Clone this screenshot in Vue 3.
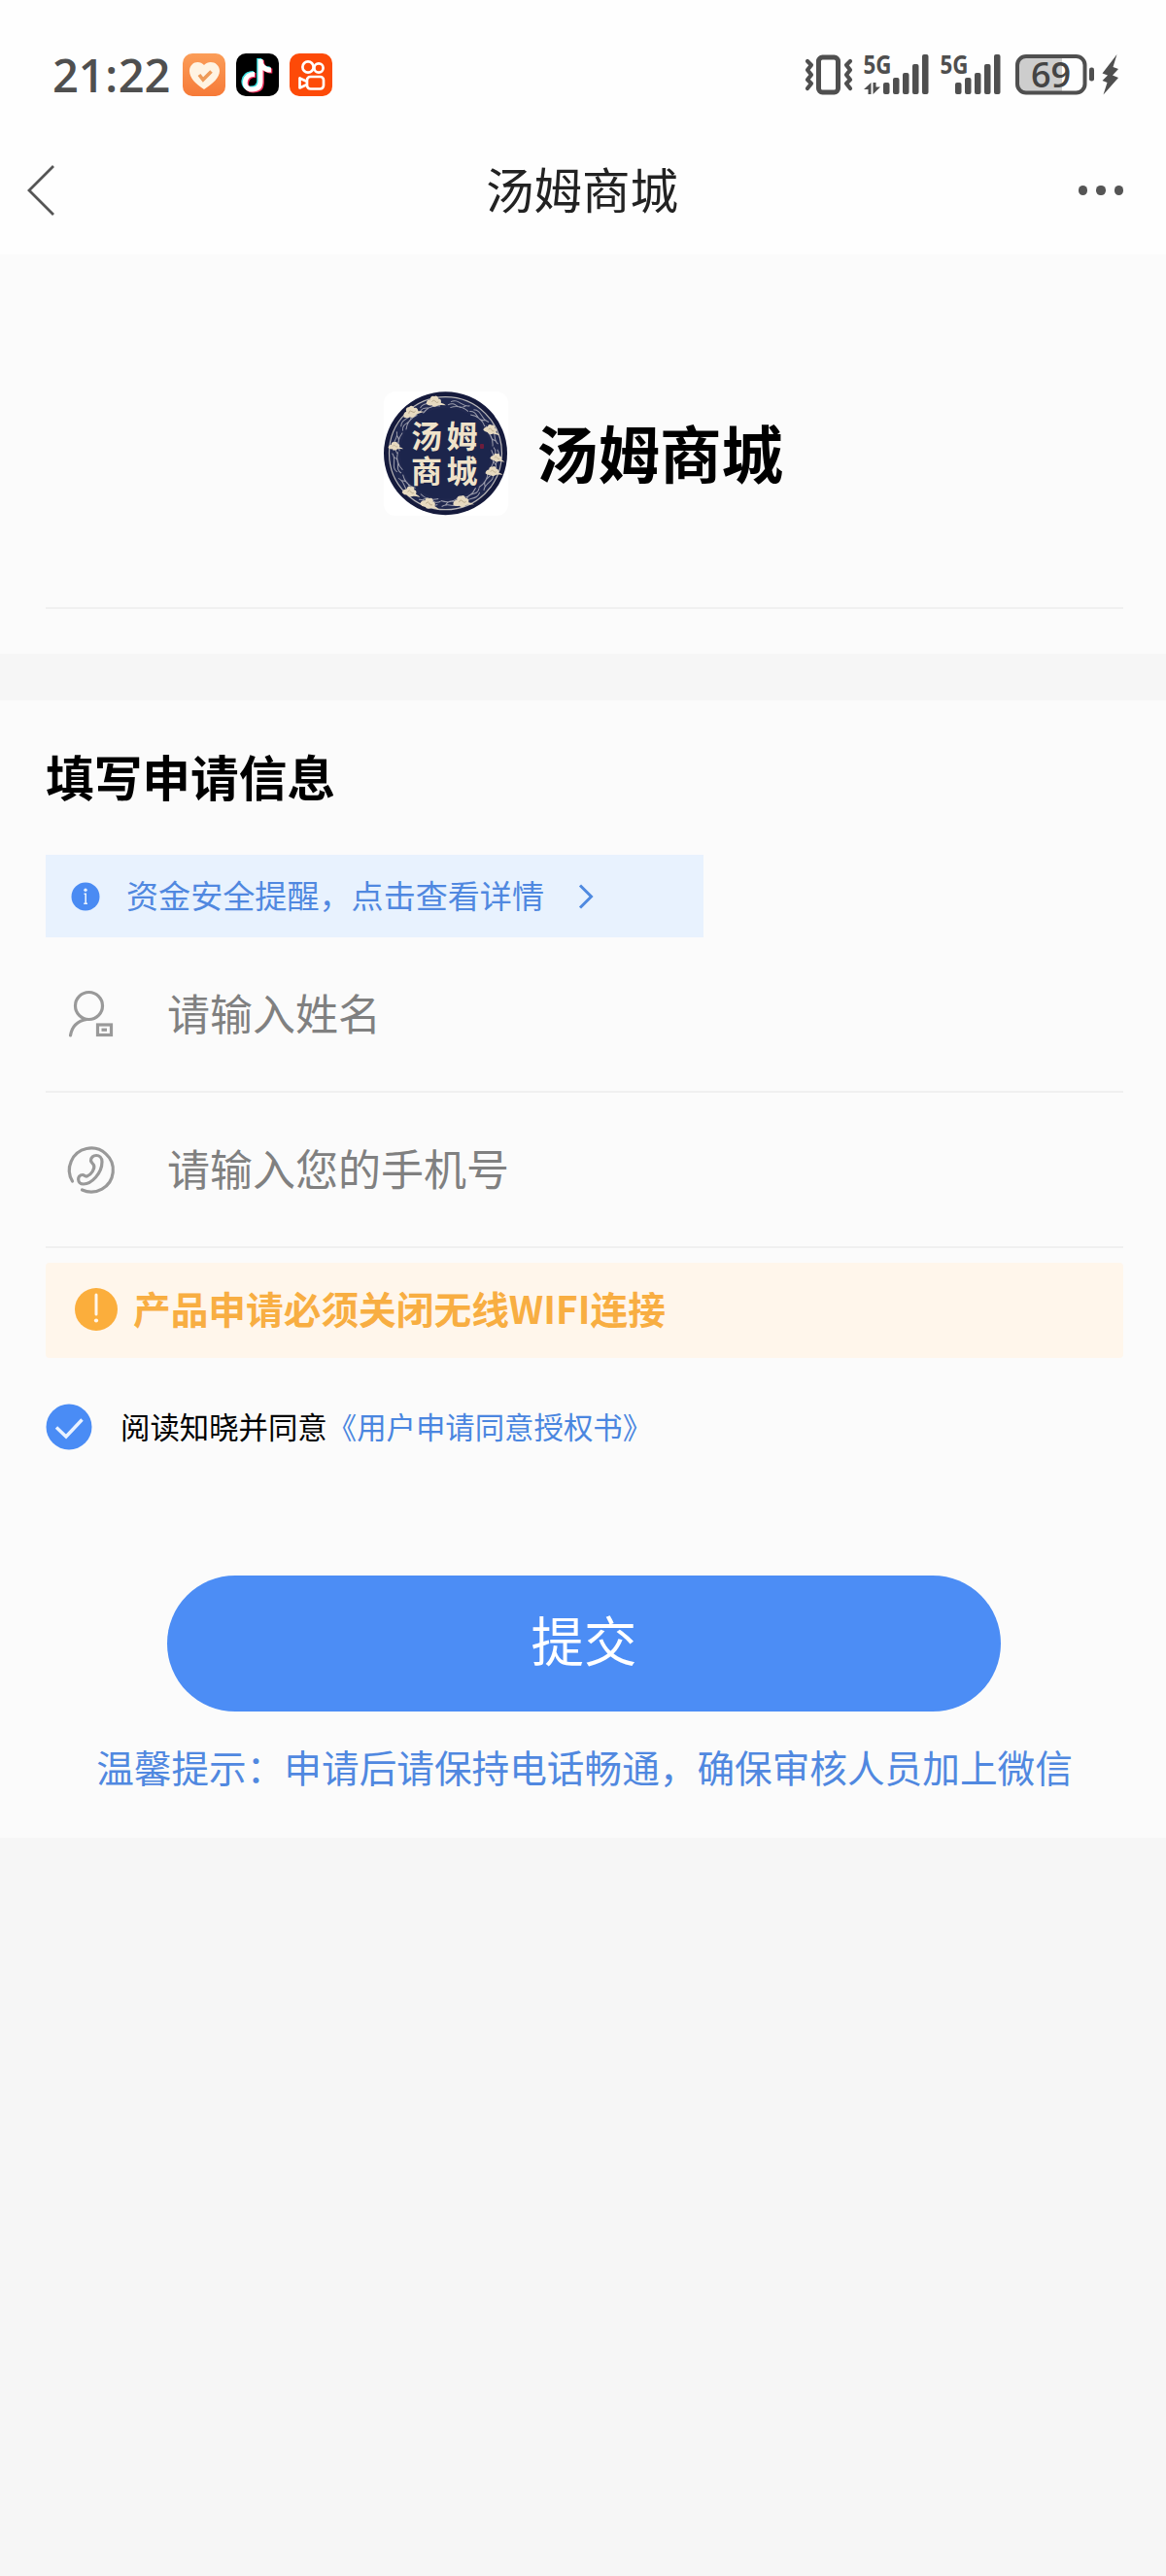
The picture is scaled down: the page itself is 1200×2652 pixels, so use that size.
<template>
    <div class="page">
        <header class="top">
            <div class="status">
                <div class="status-left">
                    <span class="clock">21<i class="colon">:</i>22</span>
                    <svg class="app-icon" viewBox="0 0 44 44">
                        <defs>
                            <linearGradient id="heart-bg" x1="0" y1="0" x2="0" y2="1">
                                <stop offset="0" stop-color="#fb9d58" />
                                <stop offset="1" stop-color="#f67a38" />
                            </linearGradient>
                        </defs>
                        <rect width="44" height="44" rx="10" fill="url(#heart-bg)" />
                        <path d="M22 37C13 31 7 25 7 18C7 9 17 6 22 12C27 6 38 9 38 18C38 25 31 31 22 37Z" fill="#fff3e2" />
                        <path d="M17 22L21 27L29.500 18.500" fill="none" stroke="#ee9a57" stroke-width="3.600" />
                    </svg>
                    <svg class="app-icon" viewBox="0 0 44 44">
                        <rect width="44" height="44" rx="10" fill="#000" />
                        <g fill="none" stroke-width="5">
                            <path :d="notePath" stroke="#37dfe0" transform="translate(-1.300 -1)" />
                            <path :d="notePath" stroke="#f5315d" transform="translate(1.300 1)" />
                            <path :d="notePath" stroke="#fff" />
                        </g>
                    </svg>
                    <svg class="app-icon" viewBox="0 0 44 44">
                        <rect width="44" height="44" rx="10" fill="#fd4a08" />
                        <g fill="none" stroke="#fff" stroke-width="2.700" stroke-linejoin="round">
                            <circle cx="19" cy="14" r="5.600" />
                            <circle cx="30" cy="15" r="4.600" />
                            <rect x="18" y="24" width="17" height="12.500" rx="3.500" />
                            <path d="M18 29L10.500 25.500V35.500L18 32" />
                        </g>
                    </svg>
                </div>
                <div class="status-right">
                    <svg class="vibrate" viewBox="0 0 50 42">
                        <rect x="14.500" y="3" width="20" height="36" rx="4" fill="none" stroke="#4f4f4f" stroke-width="5" />
                        <g fill="none" stroke="#4f4f4f" stroke-width="4.200" stroke-linecap="round" stroke-linejoin="round">
                            <path d="M3 7L7 11L3 16L7 21L3 26L7 30L3 35" />
                            <path d="M47 7L43 11L47 16L43 21L47 26L43 30L47 35" />
                        </g>
                    </svg>
                    <svg class="signal data" viewBox="0 0 67 42">
                        <text x="-.5" y="20" class="net" textLength="29" lengthAdjust="spacingAndGlyphs">5G</text>
                        <path d="M0 36L7.500 29V41H4.500V36ZM9.500 29H12.500V33.500H17L9.500 41Z" fill="#4f4f4f" />
                        <rect v-for="bar in bars" :key="bar.x" :x="bar.x + 20" :y="41 - bar.h" width="6.500" :height="bar.h" rx="2" fill="#4f4f4f" />
                    </svg>
                    <svg class="signal" viewBox="0 0 62 42">
                        <text x="-.5" y="20" class="net" textLength="29" lengthAdjust="spacingAndGlyphs">5G</text>
                        <rect v-for="bar in bars" :key="bar.x" :x="bar.x + 15" :y="41 - bar.h" width="6.500" :height="bar.h" rx="2" fill="#4f4f4f" />
                    </svg>
                    <svg class="battery" viewBox="0 0 106 42">
                        <path d="M10 2H48V39H10Q2 39 2 31V10Q2 2 10 2Z" fill="#cdcdcd" />
                        <rect x="2" y="2" width="69.500" height="37.500" rx="9" fill="none" stroke="#4f4f4f" stroke-width="4" />
                        <text x="36.500" y="33.500" class="level" text-anchor="middle">69</text>
                        <rect x="76" y="13.500" width="5" height="14" rx="2.200" fill="#4f4f4f" />
                        <path d="M104.500 0L89.500 19.500L95 21.500L89.500 27L94.500 29L90.500 41.500L106 24L100 21.500L106 15L100.500 13Z" fill="#4f4f4f" />
                    </svg>
                </div>
            </div>
            <nav class="nav">
                <svg class="back" viewBox="0 0 28 52">
                    <path d="M27 1L2 26L27 51" fill="none" stroke="#555" stroke-width="2.800" />
                </svg>
                <h1 class="nav-title">{{ shopName }}</h1>
                <div class="more"><i></i><i></i><i></i></div>
            </nav>
        </header>

        <section class="brand">
            <div class="brand-inner">
                <svg class="logo" viewBox="5 6 128 128">
                    <rect x="5" y="6" width="128" height="128" rx="12" fill="#fff" />
                    <circle cx="68.500" cy="69.700" r="63.500" fill="#151a3c" />
                    <circle cx="68.500" cy="69.700" r="58" fill="#20284f" stroke="#b9b7b8" stroke-width="1.200" />
                    <g fill="none" stroke="#9d9ead" stroke-width="1">
                        <path v-for="a in waves" :key="a" :transform="`rotate(${a} 68.500 69.700)`"
                            d="M58 21C65 14 69 25 76 17M60 17C67 11 72 20 80 16M61 23Q70 17 80 22" />
                    </g>
                    <circle cx="68.500" cy="69.700" r="46.500" fill="#1c254c" />
                    <g v-for="c in clouds" :key="c.x" :transform="`translate(${c.x} ${c.y}) rotate(${c.r}) scale(${c.s})`">
                        <path d="M-10 3Q-9 -2 -5 -2Q-5 -7 0 -6Q4 -8 5 -3Q9 -3 8 2Q12 3 14 5Q5 4 3 6Q-1 8 -3 5Q-7 6 -10 3Z" fill="#e7dac0" />
                        <path d="M-3 1Q-1 -3 1 0T5 1" fill="none" stroke="#a99878" stroke-width=".8" />
                    </g>
                    <text class="seal" x="33" y="64">汤</text>
                    <text class="seal" x="69.500" y="64">姆</text>
                    <text class="seal" x="33" y="100">商</text>
                    <text class="seal" x="69.500" y="100">城</text>
                    <rect x="104" y="60" width="4" height="5" rx="1" fill="#6d1c3c" />
                </svg>
                <h2 class="brand-name">{{ shopName }}</h2>
            </div>
        </section>

        <section class="panel">
            <h3 class="panel-title">填写申请信息</h3>

            <a class="notice">
                <svg class="notice-icon" viewBox="0 0 30 30">
                    <circle cx="15" cy="15" r="14.500" fill="#4a8bf3" />
                    <circle cx="15" cy="8.300" r="1.700" fill="#e8f2fe" />
                    <path d="M13.500 12.300H15.200V22M13.200 22.300H17" fill="none" stroke="#e8f2fe" stroke-width="1.600" />
                </svg>
                <span>资金安全提醒，点击查看详情</span>
                <svg class="arrow" viewBox="0 0 16 28">
                    <path d="M2 2.500L13.500 14L2 25.500" fill="none" stroke="#4f8ae0" stroke-width="3" />
                </svg>
            </a>

            <label class="field">
                <svg class="field-icon" viewBox="0 0 50 50">
                    <g fill="none" stroke="#999" stroke-width="3.200">
                        <circle cx="22.500" cy="16.500" r="14" />
                        <path d="M20 30.500C11 32 5 38 3.500 47" stroke-linecap="round" />
                        <rect x="31.500" y="36" width="14" height="10.500" />
                        <path d="M35.500 41.200H41" />
                    </g>
                </svg>
                <input v-model="name" type="text" placeholder="请输入姓名">
            </label>

            <label class="field">
                <svg class="field-icon" viewBox="0 0 50 50">
                    <g fill="none" stroke="#999" stroke-width="3.200" stroke-linecap="round" stroke-linejoin="round">
                        <path d="M5.500 37A22.500 22.500 0 1 1 15.500 46" />
                        <path d="M24.500 16C24 9 36 8 36 17C36 29 25 40 17 40C10 40 10 30.500 16 30.500C18 30.500 18 32.500 20.500 32C25 30.500 29 24 27.500 20.500C26.500 18.500 25 18 24.500 16Z" />
                    </g>
                </svg>
                <input v-model="phone" type="tel" placeholder="请输入您的手机号">
            </label>

            <div class="warning">
                <svg class="warning-icon" viewBox="0 0 44 44">
                    <circle cx="22" cy="22" r="22" fill="#fbae3c" />
                    <path d="M22 7V27" stroke="#fff6ea" stroke-width="3" stroke-linecap="round" />
                    <circle cx="22" cy="33.500" r="2.100" fill="#fff6ea" />
                </svg>
                <span>产品申请必须关闭无线WIFI连接</span>
            </div>

            <div class="agree" @click="agreed = !agreed">
                <svg class="check" viewBox="0 0 48 48">
                    <circle cx="24" cy="24" r="23.500" :fill="agreed ? '#4a8cf5' : '#ccc'" />
                    <path d="M11 24.500L21 34L37.500 16.500" fill="none" stroke="#e9f2ff" stroke-width="3.400" />
                </svg>
                <span>阅读知晓并同意<a class="link">《用户申请同意授权书》</a></span>
            </div>

            <button class="submit" type="button">提交</button>
            <p class="tip">温馨提示：申请后请保持电话畅通，确保审核人员加上微信</p>
        </section>
    </div>
</template>

<script setup>
import { ref } from 'vue'

const shopName = '汤姆商城'
const name = ref('')
const phone = ref('')
const agreed = ref(true)

const notePath = 'M19 21.500C7 21 6 37 16 37C22 37 25 34 25 29V6C25 13 29 17 36 17'

// signal strength bars, drawn up from the baseline
const bars = [
    { x: 0, h: 12 },
    { x: 10, h: 17 },
    { x: 20, h: 22 },
    { x: 30, h: 31 },
    { x: 40, h: 41 }
]

const waves = [15, 42, 68, 95, 122, 148, 172, 198, 230, 258, 282, 310, 340]

// clouds around the rim of the logo
const clouds = [
    { x: 57, y: 16, r: 0, s: 0.85 },
    { x: 33, y: 27, r: -20, s: 0.9 },
    { x: 115, y: 45, r: 15, s: 0.75 },
    { x: 16, y: 62, r: 0, s: 0.65 },
    { x: 121, y: 74, r: 10, s: 0.65 },
    { x: 117, y: 88, r: 0, s: 0.75 },
    { x: 32, y: 109, r: 10, s: 0.8 },
    { x: 51, y: 121, r: 12, s: 0.85 },
    { x: 85, y: 119, r: -5, s: 0.9 }
]
</script>

<style>
body {
    background: #f6f6f6;
}
</style>

<style scoped>
.page {
    width: 1200px;
    min-height: 2652px;
    background: #f6f6f6;
    font-family: "Noto Sans CJK SC", sans-serif;
    color: #000;
}

h1,
h2,
h3,
p {
    margin: 0;
}

svg {
    display: block;
    flex: none;
    overflow: visible;
}

.top {
    height: 262px;
    background: #fefefe;
}

.status {
    display: flex;
    justify-content: space-between;
    align-items: center;
    height: 154px;
    padding: 0 49px 0 54px;
}

.status-left {
    display: flex;
    align-items: center;
    gap: 11px;
}

.clock {
    width: 123px;
    font: 600 47px/50px "Open Sans", sans-serif;
    color: #4f4f4f;
    white-space: nowrap;
}

.colon {
    display: inline-block;
    width: 14px;
    font-style: normal;
    text-align: center;
}

.app-icon {
    width: 44px;
    height: 44px;
}

.status-right {
    display: flex;
    align-items: center;
    padding-bottom: 1px;
}

.vibrate {
    width: 50px;
    height: 42px;
    margin-right: 11px;
}

.signal {
    width: 62px;
    height: 42px;
    margin-right: 15px;
}

.signal.data {
    width: 67px;
    margin-right: 12px;
}

.net {
    font: 700 27px "Open Sans", sans-serif;
    fill: #4f4f4f;
}

.battery {
    width: 106px;
    height: 42px;
}

.level {
    font: 600 36px "Open Sans", sans-serif;
    fill: #444;
}

.nav {
    display: flex;
    justify-content: space-between;
    align-items: center;
    height: 84px;
    padding: 0 44px 0 28px;
}

.back {
    width: 28px;
    height: 52px;
    margin-right: 17px;
}

.nav-title {
    padding: 0 0 4px 15px;
    font-size: 49.5px;
    font-weight: 400;
    line-height: 70px;
    color: #222;
}

.more {
    display: flex;
    gap: 9px;
}

.more i {
    width: 9.3px;
    height: 9.3px;
    border-radius: 50%;
    background: #555;
}

.brand {
    box-sizing: border-box;
    height: 411px;
    padding: 0 44px 46px 47px;
    background: #fbfbfb;
}

.brand-inner {
    display: flex;
    justify-content: center;
    align-items: center;
    gap: 29px;
    box-sizing: border-box;
    height: 365px;
    padding: 46px 2px 0 0;
    border-bottom: 2px solid #f0f0f0;
}

.logo {
    width: 128px;
    height: 128px;
}

.seal {
    font-size: 32px;
    font-weight: 700;
    fill: #efe2c9;
}

.brand-name {
    padding-bottom: 6px;
    font-size: 63.5px;
    font-weight: 700;
    line-height: 90px;
}

.panel {
    box-sizing: border-box;
    height: 1171px;
    margin-top: 48px;
    padding: 42px 44px 0 47px;
    background: #fbfbfb;
}

.panel-title {
    font-size: 49.7px;
    font-weight: 700;
    line-height: 70px;
}

.notice {
    display: flex;
    align-items: center;
    box-sizing: border-box;
    width: 677px;
    height: 85px;
    margin-top: 47px;
    padding-left: 26px;
    background: #e8f2fe;
    font-size: 33.1px;
    color: #5088e0;
}

.notice span {
    padding-bottom: 3px;
}

.notice-icon {
    width: 30px;
    height: 30px;
    margin-right: 27px;
}

.arrow {
    width: 16px;
    height: 28px;
    margin-left: 35px;
}

.field {
    display: flex;
    align-items: center;
    box-sizing: border-box;
    height: 160px;
    padding-left: 22px;
    border-bottom: 2px solid #f0f0f0;
}

.field-icon {
    width: 50px;
    height: 50px;
    margin-right: 53px;
}

.field input {
    flex: 1;
    height: 70px;
    padding: 0 0 5px;
    border: none;
    outline: none;
    background: none;
    font-family: inherit;
    font-size: 44px;
    color: #333;
}

.field input::placeholder {
    color: #808080;
    opacity: 1;
}

.warning {
    display: flex;
    align-items: center;
    gap: 16px;
    box-sizing: border-box;
    height: 98px;
    margin-top: 15px;
    padding: 0 0 2px 30px;
    border-radius: 4px;
    background: #fff6eb;
    font-size: 38.7px;
    font-weight: 700;
    color: #f8ae42;
}

.warning span {
    padding-bottom: 5px;
}

.warning-icon {
    width: 44px;
    height: 44px;
}

.agree {
    display: flex;
    align-items: center;
    gap: 29px;
    height: 48px;
    margin-top: 47px;
    font-size: 30.4px;
}

.agree span {
    padding-bottom: 2px;
}

.check {
    width: 48px;
    height: 48px;
}

.link {
    color: #4a86e0;
}

.submit {
    display: block;
    width: 858px;
    height: 140px;
    margin: 129px 0 0 125px;
    padding: 0 0 12px;
    border: none;
    border-radius: 70px;
    background: #4c8df5;
    font-family: inherit;
    font-size: 54.4px;
    color: #fff;
}

.tip {
    margin-top: 28px;
    font-size: 38.65px;
    line-height: 56px;
    text-align: center;
    white-space: nowrap;
    color: #5088e0;
}
</style>
